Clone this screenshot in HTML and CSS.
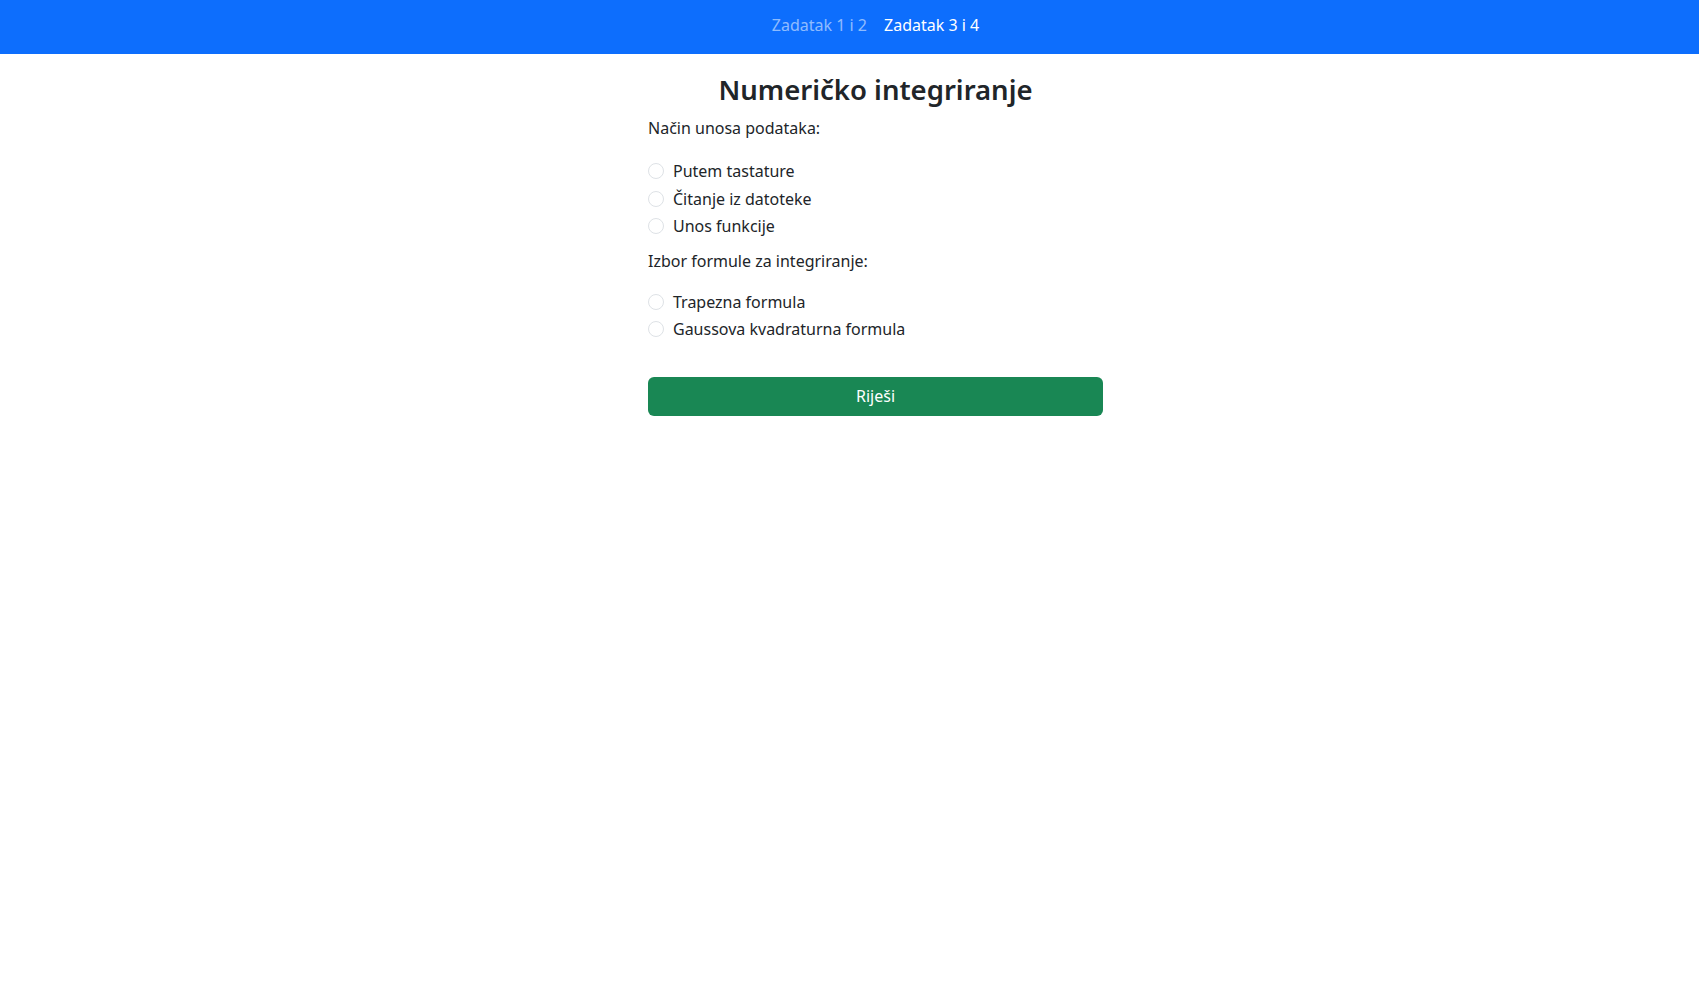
FILE: index.html
```html
<!DOCTYPE html>
<html lang="hr">
<head>
<meta charset="utf-8">
<title>Numeričko integriranje</title>
<link rel="stylesheet" href="styles.css">
</head>
<body>
<nav class="navbar">
  <div class="nav-links">
    <a class="nav-link" href="#">Zadatak 1 i 2</a>
    <a class="nav-link active" href="#">Zadatak 3 i 4</a>
  </div>
</nav>
<main class="page">
  <form class="panel">
    <h1 class="title">Numeričko integriranje</h1>
    <p class="group-label">Način unosa podataka:</p>
    <div class="radio-group">
      <label class="check"><input type="radio" name="unos" class="radio"><span>Putem tastature</span></label>
      <label class="check"><input type="radio" name="unos" class="radio"><span>Čitanje iz datoteke</span></label>
      <label class="check"><input type="radio" name="unos" class="radio"><span>Unos funkcije</span></label>
    </div>
    <p class="group-label">Izbor formule za integriranje:</p>
    <div class="radio-group">
      <label class="check"><input type="radio" name="formula" class="radio"><span>Trapezna formula</span></label>
      <label class="check"><input type="radio" name="formula" class="radio"><span>Gaussova kvadraturna formula</span></label>
    </div>
    <button type="button" class="btn-solve">Riješi</button>
  </form>
</main>
</body>
</html>
```
FILE: styles.css
```css
* { box-sizing: border-box; }
html, body { margin: 0; padding: 0; }
body {
  font-family: "Noto Sans", "Open Sans", sans-serif;
  font-size: 16px;
  line-height: 24px;
  color: #212529;
  background: #fff;
}
.navbar {
  height: 54px;
  background: #0d6efd;
  display: flex;
  justify-content: center;
  align-items: flex-start;
  padding-top: 13px;
  padding-left: 52px;
}
.nav-links {
  display: flex;
  gap: 17px;
}
.nav-link {
  color: rgba(255, 255, 255, 0.55);
  text-decoration: none;
  font-size: 16px;
  line-height: 24px;
}
.nav-link.active { color: #fff; }
.page {
  display: flex;
  justify-content: center;
  padding-left: 52px;
}
.panel {
  width: 455px;
  display: flex;
  flex-direction: column;
  padding-top: 19px;
}
.title {
  margin: 0;
  font-size: 27.5px;
  line-height: 34px;
  font-weight: 600;
  text-align: center;
}
.group-label {
  margin: 9px 0 0;
  line-height: 24px;
}
.radio-group {
  margin-top: 18px;
  display: flex;
  flex-direction: column;
}
.radio-group + .group-label { margin-top: 8px; }
.radio-group + .group-label + .radio-group { margin-top: 16px; }
.check {
  display: flex;
  align-items: flex-start;
  line-height: 27.5px;
  min-height: 27.5px;
  cursor: pointer;
}
.radio {
  appearance: none;
  -webkit-appearance: none;
  width: 16px;
  height: 16px;
  margin: 5px 9px 0 0;
  border: 1px solid #dee2e6;
  border-radius: 50%;
  background: #fff;
  flex: none;
}
.btn-solve {
  margin-top: 33px;
  height: 39px;
  border: none;
  border-radius: 6px;
  background: #198754;
  color: #fff;
  font-family: inherit;
  font-size: 16px;
  line-height: 24px;
  cursor: pointer;
}
```
